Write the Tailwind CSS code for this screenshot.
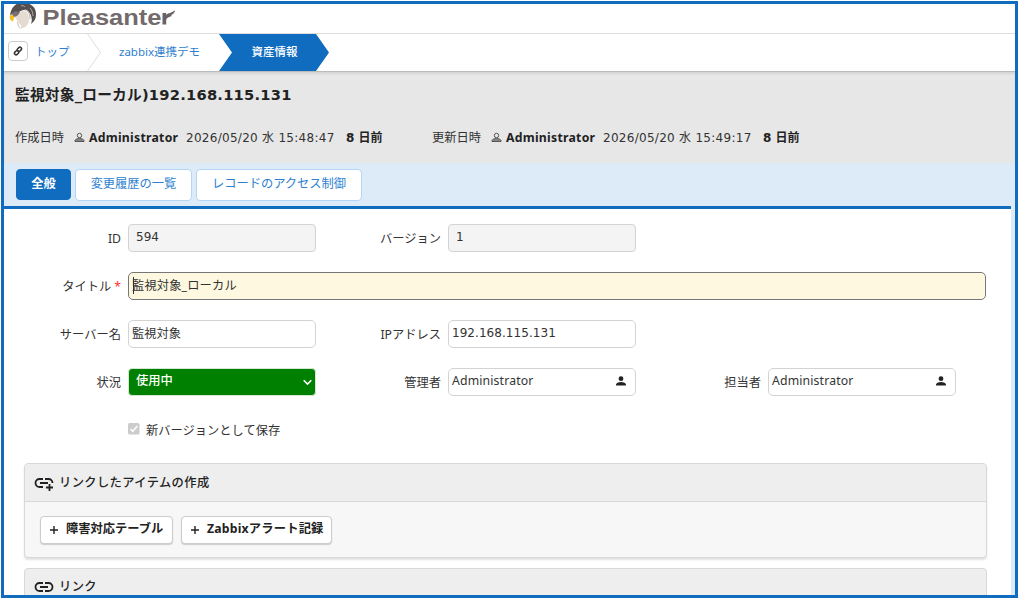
<!DOCTYPE html>
<html lang="ja">
<head>
    <meta charset="UTF-8">
    <meta name="viewport" content="width=device-width, initial-scale=1.0">
    <title>資産情報 - Pleasanter</title>
    <script src="https://cdn.jsdelivr.net/npm/@tailwindcss/browser@4"></script>
</head>

<body class="h-screen overflow-hidden bg-white p-px font-['Noto_Sans','Noto_Sans_CJK_JP',sans-serif] text-[12.25px] leading-[18px] text-[#333]">
    <div id="app" class="flex h-[597px] w-[1017px] flex-col overflow-hidden border-3 border-[#0f6cbf] bg-white">

        <!-- logo -->
        <header class="h-[30px] shrink-0 border-b border-[#ddd]">
            <svg class="block" width="180" height="28" viewBox="4 4 180 28">
                <path d="M10 15C11 8 15 4 19 3h7c6 1 10 5 10 11 0 4-1 7-5 10 2-5 0-11-4-14-5-1-8 3-11 3z" fill="#554e4e"/>
                <path d="M14 17c3 0 5-4 8-6 4-1 7 3 7 8 0 6-4 10-10 9.500 3-1 3-3 0-5-2-2-1-4-5-6.500z" fill="#e6dbd0"/>
                <path d="M12 13c2-2 5-2 8-1-1 3-4 5-7 5z" fill="#77706f"/>
                <path d="M17 22c1 2 1 4 3 6" fill="none" stroke="#c9bdb3"/>
                <path d="M10 15.500c2-1 4 0 4 2l-1 4c-3-1-4-4-3-6z" fill="#f2c21b"/>
                <path d="M21 6c2-1 3 0 4 1M25 10c4 1 5 5 5 9M30 8c2 2 3 5 3 8" fill="none" stroke="#b5adab"/>
                <text x="42.500" y="24.500" textLength="119" lengthAdjust="spacingAndGlyphs" fill="#736a6c" font-family="Liberation Sans, sans-serif" font-weight="700" font-size="22.500">Pleasante</text>
                <path d="M162.500 24.500V13h3.700v2c1.500-2 6-2 9-5-.500 3-2 4-4 5l.500 1-3.500 1.500c-1.500.500-2 1.500-2 3.500v3.500z" fill="#6a6264"/>
            </svg>
        </header>

        <!-- breadcrumb -->
        <nav class="flex h-[37px] shrink-0 items-center text-[11.5px]">
            <span class="mb-[3px] ml-1 flex size-5 items-center justify-center rounded border border-[#ccc]">
                <svg width="10" height="10" viewBox="0 0 10 10" fill="none" stroke="#333" stroke-width="1.500">
                    <rect x="4.800" y="1" width="3.200" height="4.600" rx="1.500" transform="rotate(45 6.400 3.300)"/>
                    <rect x="2" y="4.400" width="3.200" height="4.600" rx="1.500" transform="rotate(45 3.600 6.700)"/>
                </svg>
            </span>
            <a class="mb-0.5 ml-[7px] w-[52px] text-[#2f7fd0]">トップ</a>
            <svg width="14" height="37" viewBox="0 0 14 37" fill="none" stroke="#ddd"><path d="M.500 0l13 18.500L.500 37"/></svg>
            <a class="mb-0.5 ml-[18px] w-[100px] text-[#2f7fd0]">zabbix連携デモ</a>
            <span class="flex h-full w-[110px] items-center justify-center bg-[#0f6cbf] pb-0.5 pl-px font-medium text-white [clip-path:polygon(0_0,97px_0,100%_50%,97px_100%,0_100%,13px_50%)]">資産情報</span>
        </nav>

        <!-- record header -->
        <section class="h-[92px] shrink-0 border-t border-[#bbb] bg-[#e7e7e7] px-[11px] shadow-[inset_0_2px_2px_#d5d5d5]">
            <h1 class="mt-[11px] font-['DejaVu_Sans','Noto_Sans_CJK_JP',sans-serif] text-[14.7px] leading-6 font-bold tracking-[0.23px] text-[#222]">監視対象_ローカル)192.168.115.131</h1>
            <div class="mt-[21px] flex items-center">
                <div class="flex w-[417px] items-center">
                    <span class="w-[59px] pt-px">作成日時</span>
                    <svg class="mr-1" width="11" height="11" viewBox="0 0 11 11" fill="none" stroke="#555"><circle cx="5.500" cy="3.500" r="2.200"/><path d="M1 9.500V8.300C2.500 6 8.500 6 10 8.300v1.200z" fill="#888"/></svg>
                    <b class="w-[97px] tracking-[0.26px] text-[#222]">Administrator</b>
                    <span class="w-[160px] pt-px font-['DejaVu_Sans','Noto_Sans_CJK_JP',sans-serif] text-[12px] tracking-[0.28px] whitespace-nowrap">2026/05/20 水 15:48:47</span>
                    <b class="pt-px font-['DejaVu_Sans','Noto_Sans_CJK_JP',sans-serif] text-[12px] whitespace-nowrap text-[#222]">8 日前</b>
                </div>
                <div class="flex items-center">
                    <span class="w-[59px] pt-px">更新日時</span>
                    <svg class="mr-1" width="11" height="11" viewBox="0 0 11 11" fill="none" stroke="#555"><circle cx="5.500" cy="3.500" r="2.200"/><path d="M1 9.500V8.300C2.500 6 8.500 6 10 8.300v1.200z" fill="#888"/></svg>
                    <b class="w-[97px] tracking-[0.26px] text-[#222]">Administrator</b>
                    <span class="w-[160px] pt-px font-['DejaVu_Sans','Noto_Sans_CJK_JP',sans-serif] text-[12px] tracking-[0.28px] whitespace-nowrap">2026/05/20 水 15:49:17</span>
                    <b class="pt-px font-['DejaVu_Sans','Noto_Sans_CJK_JP',sans-serif] text-[12px] whitespace-nowrap text-[#222]">8 日前</b>
                </div>
            </div>
        </section>

        <div class="flex min-h-0 grow flex-col bg-[#ddebf8] pr-1">
            <!-- tabs -->
            <div class="flex h-[46px] shrink-0 gap-1 border-b-3 border-[#0f6cbf] pt-[6px] pl-3">
                <button class="h-[31px] w-[55px] rounded border border-[#0f6cbf] bg-[#0f6cbf] pb-0.5 font-bold text-white">全般</button>
                <button class="h-8 w-[117px] rounded border border-[#b5d5f5] bg-white pb-0.5 text-[#2f7fd0]">変更履歴の一覧</button>
                <button class="h-8 w-[166px] rounded border border-[#b5d5f5] bg-white pb-0.5 text-[#2f7fd0]">レコードのアクセス制御</button>
            </div>

            <!-- form -->
            <div class="min-h-0 grow bg-white pt-[15px]">
                <div class="flex flex-col gap-5">
                    <div class="flex h-7">
                        <label class="w-[124px] pt-[6px] pr-[7px] text-right">ID</label>
                        <span class="w-[188px] rounded border border-[#d3d3d3] bg-[#f4f4f4] px-[7px] pt-[3px] font-['DejaVu_Sans'] text-[12px]">594</span>
                        <label class="w-[132px] pt-[6px] pr-[7px] text-right">バージョン</label>
                        <span class="w-[188px] rounded border border-[#d3d3d3] bg-[#f4f4f4] px-[7px] pt-[3px] font-['DejaVu_Sans'] text-[12px]">1</span>
                    </div>
                    <div class="flex h-7">
                        <label class="w-[124px] pt-[6px] pr-[7px] text-right">タイトル<span class="ml-[3px] text-[#f33]">*</span></label>
                        <span class="flex w-[858px] items-start rounded-[5px] border border-[#777] bg-[#fef8e0] px-[3px] pt-1 tracking-[0.15px]"><i class="-mr-px h-[17px] w-px translate-x-px bg-[#333]"></i>監視対象_ローカル</span>
                    </div>
                    <div class="flex h-7">
                        <label class="w-[124px] pt-[6px] pr-[7px] text-right">サーバー名</label>
                        <span class="w-[188px] rounded-[5px] border border-[#d3d3d3] px-[3px] pt-1">監視対象</span>
                        <label class="w-[132px] pt-[6px] pr-[7px] text-right">IPアドレス</label>
                        <span class="w-[188px] rounded-[5px] border border-[#d3d3d3] px-[3px] pt-[3px] font-['DejaVu_Sans'] text-[12px] tracking-[0.05px]">192.168.115.131</span>
                    </div>
                    <div class="flex h-7">
                        <label class="w-[124px] pt-[6px] pr-[7px] text-right">状況</label>
                        <span class="flex h-7 w-[188px] justify-between rounded border border-[#d3e8d3] bg-[#008000] pt-[3px] pr-[3px] pl-[7px] font-medium text-white">使用中
                            <svg class="mt-[7px]" width="9" height="7" viewBox="0 0 9 7" fill="none" stroke="#fff" stroke-width="1.600"><path d="M.700 1.200l3.800 3.800 3.800-3.800"/></svg>
                        </span>
                        <label class="w-[132px] pt-[6px] pr-[7px] text-right">管理者</label>
                        <span class="flex w-[188px] justify-between rounded-[5px] border border-[#d3d3d3] pt-[3px] pr-[9px] pl-[3px] tracking-[0.15px]">Administrator
                            <svg class="mt-1" width="10" height="10" viewBox="0 0 10 10" fill="#222"><circle cx="5" cy="2.700" r="2.400"/><path d="M0 9.500V8.200C1.500 5.300 8.500 5.300 10 8.200v1.300z"/></svg>
                        </span>
                        <label class="w-[132px] pt-[6px] pr-[7px] text-right">担当者</label>
                        <span class="flex w-[188px] justify-between rounded-[5px] border border-[#d3d3d3] pt-[3px] pr-[9px] pl-[3px] tracking-[0.15px]">Administrator
                            <svg class="mt-1" width="10" height="10" viewBox="0 0 10 10" fill="#222"><circle cx="5" cy="2.700" r="2.400"/><path d="M0 9.500V8.200C1.500 5.300 8.500 5.300 10 8.200v1.300z"/></svg>
                        </span>
                    </div>
                    <div class="flex h-7 pl-[124px]">
                        <svg class="mt-[7px] mr-[6px]" width="12" height="12" viewBox="0 0 12 12"><rect width="11.500" height="11.500" rx="1.500" fill="#ccc"/><path d="M2.500 6l2.300 2.300L9.300 3" fill="none" stroke="#fff" stroke-width="1.500"/></svg>
                        <label class="pt-[6px]">新バージョンとして保存</label>
                    </div>
                </div>

                <!-- links -->
                <section class="mt-[19px] ml-5 h-[95px] w-[963px] rounded border border-[#d8d8d8] bg-[#f7f7f7] shadow-[0_2px_2px_#e2e2e2]">
                    <h2 class="flex h-[38px] items-center rounded-t border-b border-[#d8d8d8] bg-[#eee] pl-[9px] font-medium tracking-[0.4px] text-[#222]">
                        <svg class="mt-0.5 mr-[5px]" width="20" height="14" viewBox="0 0 20 14" fill="none" stroke="#222" stroke-width="1.800"><path d="M9 2H5.500a4 4 0 0 0 0 8H9M11 2h3.500a4 4 0 0 1 4 4M6 6h8M15.500 7v7M12 10.500h7"/></svg>
                        リンクしたアイテムの作成
                    </h2>
                    <div class="flex gap-2 pt-[14px] pl-[15px]">
                        <button class="flex h-7 w-[133px] items-center rounded border border-[#ccc] bg-white pb-0.5 pl-[9px] font-bold whitespace-nowrap text-[#222] shadow-[0_1px_1px_#ccc]">
                            <svg class="mt-px mr-2" width="8" height="8" viewBox="0 0 8 8" stroke="#222" stroke-width="1.400"><path d="M4 0v8M0 4h8"/></svg>
                            障害対応テーブル
                        </button>
                        <button class="flex h-7 w-[151px] items-center rounded border border-[#ccc] bg-white pb-0.5 pl-[9px] font-bold tracking-[0.2px] whitespace-nowrap text-[#222] shadow-[0_1px_1px_#ccc]">
                            <svg class="mt-px mr-2" width="8" height="8" viewBox="0 0 8 8" stroke="#222" stroke-width="1.400"><path d="M4 0v8M0 4h8"/></svg>
                            Zabbixアラート記録
                        </button>
                    </div>
                </section>
                <section class="mt-[10px] ml-5 h-[95px] w-[963px] rounded border border-[#d8d8d8] bg-[#eee]">
                    <h2 class="flex h-[36px] items-center pl-[9px] font-medium tracking-[0.4px] text-[#222]">
                        <svg class="mr-[5px]" width="20" height="12" viewBox="0 0 20 12" fill="none" stroke="#222" stroke-width="1.800"><path d="M9 2H5.500a4 4 0 0 0 0 8H9M11 2h3.500a4 4 0 0 1 0 8H11M6 6h8"/></svg>
                        リンク
                    </h2>
                </section>
            </div>
        </div>
    </div>
</body>
</html>
